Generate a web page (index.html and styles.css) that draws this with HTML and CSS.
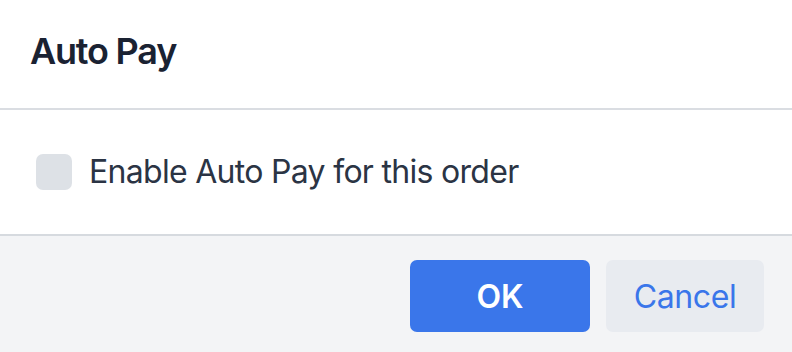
FILE: index.html
```html
<!DOCTYPE html>
<html>
<head>
<meta charset="utf-8">
<link rel="stylesheet" href="styles.css">
</head>
<body>
<div class="dialog">
  <div class="dialog-header">
    <h1 class="dialog-title">Auto Pay</h1>
  </div>
  <div class="dialog-body">
    <label class="check-row">
      <span class="checkbox"></span>
      <span class="check-label">Enable Auto Pay for this order</span>
    </label>
  </div>
  <div class="dialog-footer">
    <button class="btn btn-primary">OK</button>
    <button class="btn btn-secondary">Cancel</button>
  </div>
</div>
</body>
</html>
```
FILE: styles.css
```css
html, body {
  margin: 0;
  padding: 0;
  background: #ffffff;
}
body {
  font-family: Inter, "Noto Sans", "Liberation Sans", sans-serif;
  width: 792px;
  height: 352px;
  overflow: hidden;
}
.dialog {
  display: flex;
  flex-direction: column;
  height: 352px;
}
.dialog-header {
  height: 110px;
  box-sizing: border-box;
  padding: 33px 30px 0;
  border-bottom: 2px solid #dadde2;
}
.dialog-title {
  margin: 0;
  font-size: 36px;
  line-height: 36px;
  font-weight: 600;
  letter-spacing: -1.2px;
  color: #1a2232;
}
.dialog-body {
  height: 126px;
  box-sizing: border-box;
  display: flex;
  align-items: center;
  padding-left: 36px;
  border-bottom: 2px solid #d6dadf;
}
.check-row {
  display: flex;
  align-items: center;
  gap: 17px;
}
.checkbox {
  width: 36px;
  height: 36px;
  border-radius: 7px;
  background: #dde1e6;
}
.check-label {
  font-size: 32px;
  line-height: 40px;
  letter-spacing: -0.7px;
  color: #2b3444;
}
.dialog-footer {
  flex: 1;
  background: #f3f4f6;
  display: flex;
  justify-content: flex-end;
  align-items: flex-start;
  gap: 16px;
  padding: 24px 28px 0 0;
}
.btn {
  height: 72px;
  border: none;
  border-radius: 7px;
  font-family: inherit;
  font-size: 32px;
  padding: 0;
}
.btn-primary {
  width: 180px;
  background: #3a76ea;
  color: #ffffff;
  font-weight: 600;
}
.btn-secondary {
  width: 158px;
  background: #e8ebf0;
  color: #3a76ea;
  font-weight: 400;
  letter-spacing: -0.4px;
}
```
